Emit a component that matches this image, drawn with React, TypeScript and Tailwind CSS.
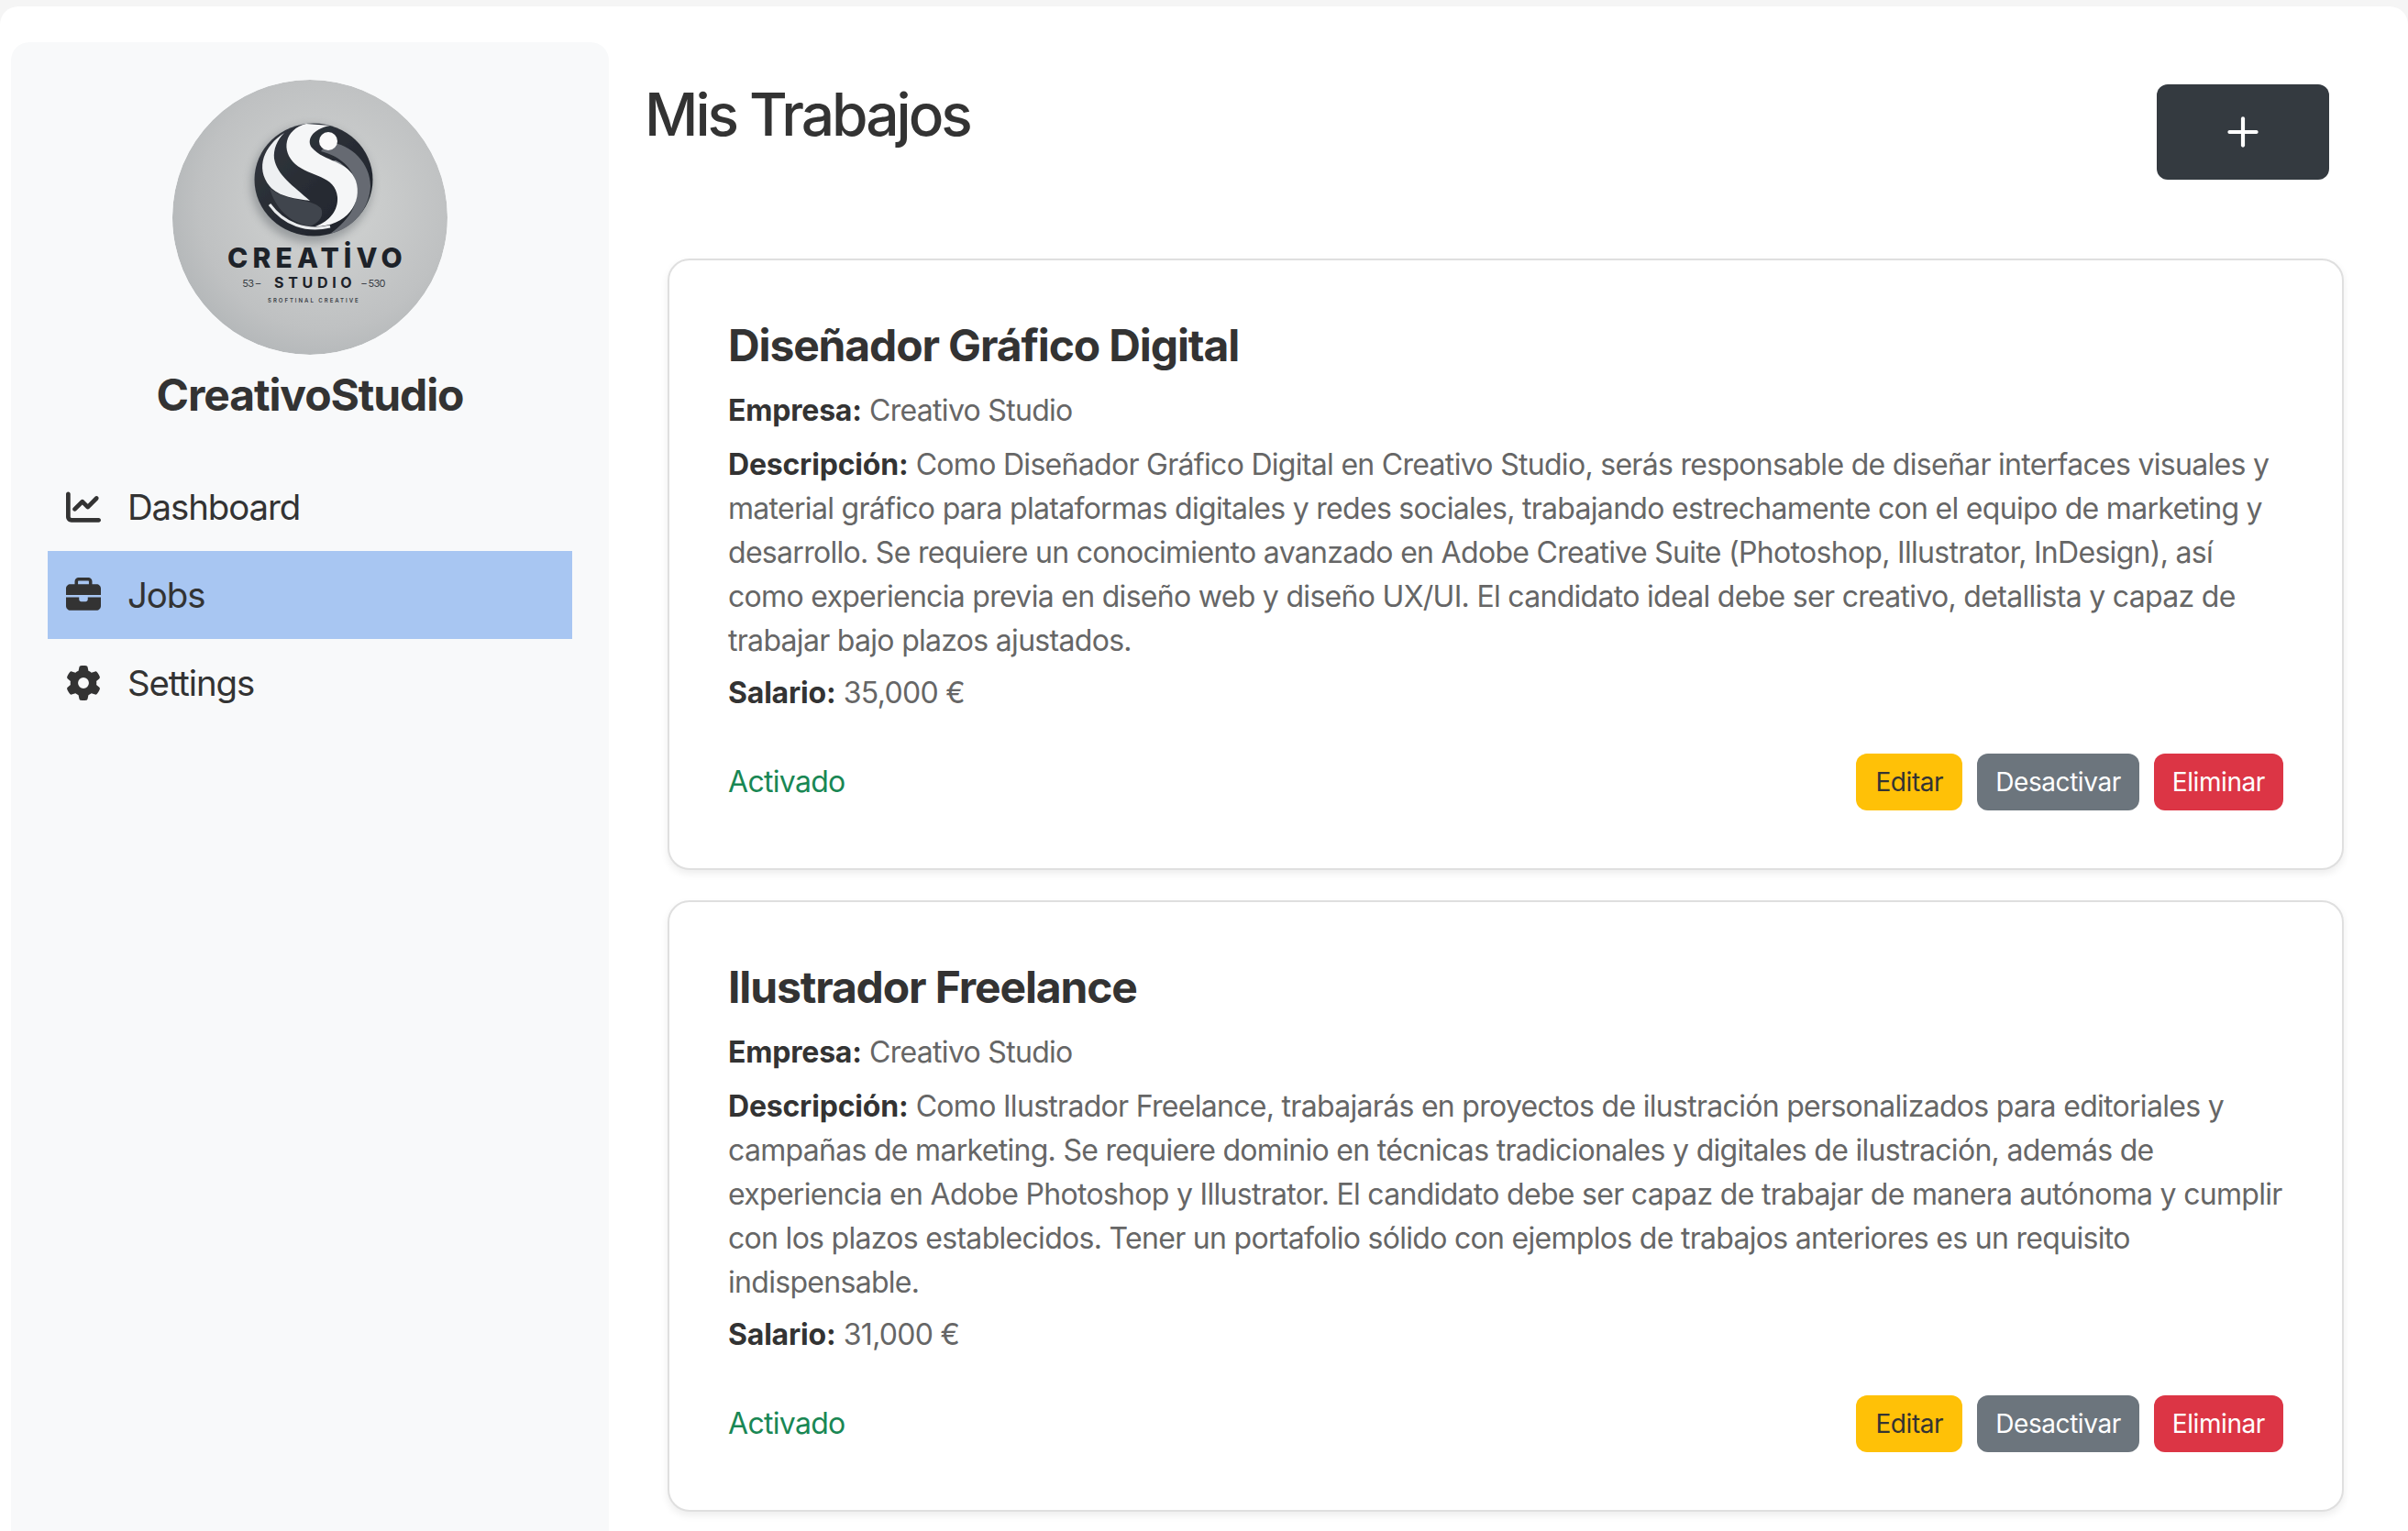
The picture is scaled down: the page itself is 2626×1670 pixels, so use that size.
import React from 'react';
import { Plus } from 'lucide-react';
import { FaBriefcase, FaChartLine, FaGear } from 'react-icons/fa6';

const jobs = [
  {
    id: 1,
    title: 'Diseñador Gráfico Digital',
    company: 'Creativo Studio',
    description:
      'Como Diseñador Gráfico Digital en Creativo Studio, serás responsable de diseñar interfaces visuales y material gráfico para plataformas digitales y redes sociales, trabajando estrechamente con el equipo de marketing y desarrollo. Se requiere un conocimiento avanzado en Adobe Creative Suite (Photoshop, Illustrator, InDesign), así como experiencia previa en diseño web y diseño UX/UI. El candidato ideal debe ser creativo, detallista y capaz de trabajar bajo plazos ajustados.',
    salary: '35,000 €',
  },
  {
    id: 2,
    title: 'Ilustrador Freelance',
    company: 'Creativo Studio',
    description:
      'Como Ilustrador Freelance, trabajarás en proyectos de ilustración personalizados para editoriales y campañas de marketing. Se requiere dominio en técnicas tradicionales y digitales de ilustración, además de experiencia en Adobe Photoshop y Illustrator. El candidato debe ser capaz de trabajar de manera autónoma y cumplir con los plazos establecidos. Tener un portafolio sólido con ejemplos de trabajos anteriores es un requisito indispensable.',
    salary: '31,000 €',
  },
];

const navItems = [
  { label: 'Dashboard', icon: FaChartLine, active: false },
  { label: 'Jobs', icon: FaBriefcase, active: true },
  { label: 'Settings', icon: FaGear, active: false },
];

const Logo: React.FC = () => (
  <svg viewBox="0 0 300 300" className="w-[300px] h-[300px] block">
    <defs>
      <radialGradient id="disc" cx="55%" cy="45%" r="65%">
        <stop offset="0%" stopColor="#d3d5d4" />
        <stop offset="70%" stopColor="#bfc1c2" />
        <stop offset="100%" stopColor="#aeb2b4" />
      </radialGradient>
      <linearGradient id="ball" x1="0" y1="0" x2="1" y2="1">
        <stop offset="0%" stopColor="#33373f" />
        <stop offset="100%" stopColor="#1e2229" />
      </linearGradient>
      <filter id="soft">
        <feGaussianBlur stdDeviation="0.7" />
      </filter>
      <filter id="drop">
        <feGaussianBlur stdDeviation="5" />
      </filter>
    </defs>
    <circle cx="150" cy="150" r="150" fill="url(#disc)" />
    <ellipse cx="152" cy="114" rx="66" ry="64" fill="#6f7479" opacity="0.55" filter="url(#drop)" />
    <g filter="url(#soft)">
      <ellipse cx="154" cy="109" rx="64.5" ry="61.5" fill="url(#ball)" />
      <path d="M170 68 C196 70 216 92 216 116 C215 140 198 162 172 168 C194 152 205 134 200 112 C196 96 184 84 162 78 Z" fill="#666b72" />
      <path d="M178 88 C192 94 197 106 195 124 C192 140 184 150 172 158 C182 140 186 126 182 110 C179 100 172 94 164 90 Z" fill="#8b8f95" />
      <path d="M106 118 C124 134 150 128 162 140 C166 148 160 156 150 160 C128 156 112 140 106 118 Z" fill="#41454d" />
      <path d="M122 58 C100 72 90 96 106 116 C116 128 136 130 150 132 C132 116 114 104 111 86 C110 76 114 66 122 58 Z" fill="#eef0f2" />
      <path d="M146 48 C122 54 118 78 134 92 C150 106 178 104 180 128 C181 142 172 154 156 160 C190 160 208 134 200 110 C192 88 166 90 152 74 C146 66 152 54 172 50 Z" fill="#f5f6f7" />
      <path d="M106 136 C122 158 146 166 172 160" fill="none" stroke="#e9ebed" strokeWidth="3" />
      <circle cx="170" cy="67" r="10" fill="#fafafa" />
    </g>
    <text x="155" y="205" textAnchor="middle" fill="#1d2229" fontFamily="Inter, sans-serif" fontWeight="800" fontSize="30" textLength="190" lengthAdjust="spacing">CREATİVO</text>
    <text x="153" y="227" textAnchor="middle" fill="#1d2229" fontFamily="Inter, sans-serif" fontWeight="700" fontSize="16" textLength="84" lengthAdjust="spacing">STUDIO</text>
    <text x="86" y="226" textAnchor="middle" fill="#3a3f46" fontFamily="Inter, sans-serif" fontSize="11">53 –</text>
    <text x="219" y="226" textAnchor="middle" fill="#3a3f46" fontFamily="Inter, sans-serif" fontSize="11">– 530</text>
    <text x="153" y="243" textAnchor="middle" fill="#3a3f46" fontFamily="Inter, sans-serif" fontWeight="600" fontSize="6" textLength="98" lengthAdjust="spacing">SROFTINAL  CREATIVE</text>
  </svg>
);

const Sidebar: React.FC = () => (
  <aside className="w-[652px] shrink-0 ml-[12px] mt-[39px] bg-[#f8f9fa] rounded-t-[20px] px-[40px] pt-[41px] flex flex-col">
    <div className="flex flex-col items-center">
      <div className="w-[300px] h-[300px] rounded-full overflow-hidden">
        <Logo />
      </div>
      <h4 className="mt-[15px] text-[48px] leading-[58px] font-bold tracking-[-1.1px] text-[#333333]">CreativoStudio</h4>
    </div>
    <nav className="mt-[45px] flex flex-col">
      {navItems.map((item) => {
        const Icon = item.icon;
        return (
          <a
            key={item.label}
            className={`h-[96px] flex items-center pl-[20px] text-[38.4px] tracking-[-1.1px] text-[#333333] ${item.active ? 'bg-[#a8c6f2]' : ''}`}
          >
            <Icon className="w-[38px] h-[38px] shrink-0" />
            <span className="ml-[29px]">{item.label}</span>
          </a>
        );
      })}
    </nav>
  </aside>
);

const JobCard: React.FC<{ job: (typeof jobs)[number] }> = ({ job }) => (
  <div className="bg-white border-2 border-[#dfdfdf] rounded-[24px] shadow-[0_4px_8px_rgba(0,0,0,0.075)] p-[64px] pb-[63px]">
    <h3 className="text-[48px] leading-[58px] font-bold tracking-[-1.14px] text-[#333333] mb-[18px]">{job.title}</h3>
    <p className="text-[#666666]">
      <strong className="font-bold tracking-[-0.2px] text-[#333333]">Empresa:</strong> {job.company}
    </p>
    <p className="mt-[11px] -mr-[6px] text-[#666666]">
      <strong className="font-bold tracking-[-0.2px] text-[#333333]">Descripción:</strong> {job.description}
    </p>
    <p className="mt-[9px] text-[#666666]">
      <strong className="font-bold tracking-[-0.2px] text-[#333333]">Salario:</strong> {job.salary}
    </p>
    <div className="mt-[42px] flex items-center justify-between">
      <span className="text-[#198754]">Activado</span>
      <div className="flex gap-[16px] text-[28px] leading-[42px] tracking-[-0.42px]">
        <button className="h-[62px] px-[21px] rounded-[12px] bg-[#ffc107] text-[#333333]">Editar</button>
        <button className="h-[62px] px-[20px] rounded-[12px] bg-[#6c757d] text-white">Desactivar</button>
        <button className="h-[62px] px-[20px] rounded-[12px] bg-[#dc3545] text-white">Eliminar</button>
      </div>
    </div>
  </div>
);

const App: React.FC = () => (
  <div className="h-screen overflow-hidden bg-[#f5f5f5] pt-[7px] font-['Inter',sans-serif] text-[32px] leading-[48px] tracking-[-0.7px]">
    <div className="h-full bg-white rounded-t-[20px] flex">
      <Sidebar />
      <main className="flex-1 min-w-0 pl-[39px] pr-[70px]">
        <div className="flex items-start justify-between pr-[16px] pt-[85px]">
          <h1 className="text-[64px] leading-[77px] -mt-[6px] font-medium tracking-[-3px] text-[#333333]">Mis Trabajos</h1>
          <button className="w-[188px] h-[104px] rounded-[12px] bg-[#343a40] text-white flex items-center justify-center">
            <Plus size={50} strokeWidth={2} />
          </button>
        </div>
        <div className="mt-[86px] ml-[25px] flex flex-col gap-[33px]">
          {jobs.map((job) => (
            <JobCard key={job.id} job={job} />
          ))}
        </div>
      </main>
    </div>
  </div>
);

export default App;
